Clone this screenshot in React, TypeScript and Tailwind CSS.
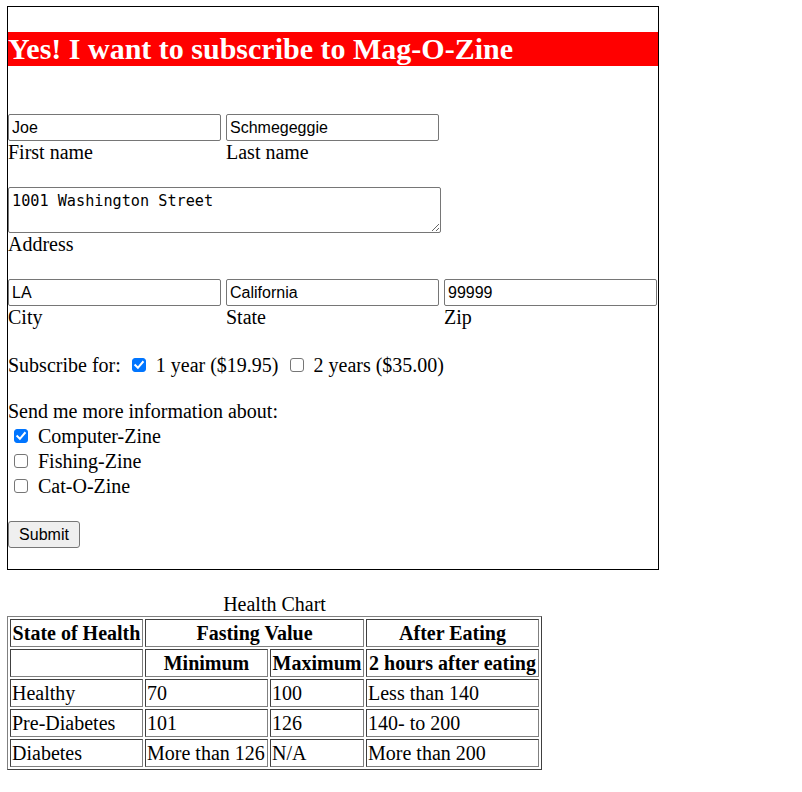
import React, { useState } from 'react';

const inputCls =
  "h-[27px] w-[213px] rounded-[2px] border border-[#767676] bg-white px-[3px] font-['Liberation_Sans',Arial,sans-serif] text-[16px] leading-[19px] text-black";

function Field({ value, label }: { value: string; label: string }) {
  return (
    <div className="flex flex-col">
      <input type="text" defaultValue={value} className={inputCls} />
      <span className="leading-[23px]">{label}</span>
    </div>
  );
}

// drawn like Chrome's native checkbox
function Check({ checked = false, className = '' }: { checked?: boolean; className?: string }) {
  const [on, setOn] = useState(checked);
  return (
    <span className={`relative mt-[4px] h-[14px] w-[14px] shrink-0 self-start ${className}`}>
      <input
        type="checkbox"
        checked={on}
        onChange={() => setOn(!on)}
        className="block h-[14px] w-[14px] appearance-none rounded-[3px] border border-[#767676] bg-white checked:border-[#0075ff] checked:bg-[#0075ff]"
      />
      {on && (
        <svg viewBox="0 0 14 14" className="pointer-events-none absolute inset-0 h-[14px] w-[14px]">
          <path d="M3.3 7.2 L5.9 9.8 L10.8 4" fill="none" stroke="white" strokeWidth="2" strokeLinecap="square" />
        </svg>
      )}
    </span>
  );
}

const zines = [
  { name: 'Computer-Zine', checked: true },
  { name: 'Fishing-Zine', checked: false },
  { name: 'Cat-O-Zine', checked: false },
];

const rows = [
  ['Healthy', '70', '100', 'Less than 140'],
  ['Pre-Diabetes', '101', '126', '140- to 200'],
  ['Diabetes', 'More than 126', 'N/A', 'More than 200'],
];

const cell =
  'border border-t-[#404040] border-l-[#404040] border-b-[#808080] border-r-[#808080] p-[1px] leading-[24px] align-middle';

export default function App() {
  return (
    <div className="min-h-screen bg-white pl-[7px] pt-[6px] font-['Liberation_Serif','Times_New_Roman',serif] text-[20px] leading-[23px] text-black">
      {/* subscription form */}
      <form className="w-[652px] border border-black" onSubmit={(e) => e.preventDefault()}>
        <h1 className="mt-[25px] bg-[#ff0000] text-[30px] font-bold leading-[34px] text-white">
          Yes! I want to subscribe to Mag-O-Zine
        </h1>

        <div className="mt-[48px] flex gap-[5px]">
          <Field value="Joe" label="First name" />
          <Field value="Schmegeggie" label="Last name" />
        </div>

        <div className="mt-[23px] flex flex-col">
          <textarea
            defaultValue="1001 Washington Street"
            className="h-[46px] w-[433px] rounded-[2px] border border-[#767676] bg-white px-[3px] pt-[4px] pb-[2px] font-['DejaVu_Sans_Mono',monospace] text-[15.2px] leading-[18px]"
          />
          <span className="leading-[23px]">Address</span>
        </div>

        <div className="mt-[23px] flex gap-[5px]">
          <Field value="LA" label="City" />
          <Field value="California" label="State" />
          <Field value="99999" label="Zip" />
        </div>

        {/* subscription length */}
        <div className="mt-[23px] flex h-[25px] items-start pt-[2px]">
          <span>Subscribe for:</span>
          <Check checked className="ml-[11px]" />
          <span className="ml-[10px]">1 year ($19.95)</span>
          <Check className="ml-[11px]" />
          <span className="ml-[10px]">2 years ($35.00)</span>
        </div>

        <p className="mt-[23px]">Send me more information about:</p>
        {zines.map((z) => (
          <div key={z.name} className="flex h-[25px] items-start pt-[2px]">
            <Check checked={z.checked} className="ml-[6px]" />
            <span className="ml-[10px]">{z.name}</span>
          </div>
        ))}

        <div className="mt-[23px] pb-[21px]">
          <button
            type="submit"
            className="h-[27px] w-[72px] rounded-[3px] border border-[#767676] bg-[#efefef] font-['Liberation_Sans',Arial,sans-serif] text-[16px] leading-[19px] text-black"
          >
            Submit
          </button>
        </div>
      </form>

      {/* health chart */}
      <table className="mt-[23px] w-[535px] table-fixed border-separate border-spacing-[2px] border border-t-[#808080] border-l-[#808080] border-b-[#404040] border-r-[#404040]">
        <caption className="leading-[23px]">Health Chart</caption>
        <colgroup>
          <col className="w-[133px]" />
          <col className="w-[123px]" />
          <col className="w-[94px]" />
          <col className="w-[173px]" />
        </colgroup>
        <thead>
          <tr>
            <th className={`${cell} font-bold whitespace-nowrap`}>State of Health</th>
            <th colSpan={2} className={`${cell} font-bold`}>Fasting Value</th>
            <th className={`${cell} font-bold`}>After Eating</th>
          </tr>
          <tr>
            <th className={cell}></th>
            <th className={`${cell} font-bold`}>Minimum</th>
            <th className={`${cell} font-bold`}>Maximum</th>
            <th className={`${cell} font-bold whitespace-nowrap`}>2 hours after eating</th>
          </tr>
        </thead>
        <tbody>
          {rows.map((r) => (
            <tr key={r[0]}>
              {r.map((v, i) => (
                <td key={i} className={`${cell} text-left whitespace-nowrap`}>
                  {v}
                </td>
              ))}
            </tr>
          ))}
        </tbody>
      </table>
    </div>
  );
}
